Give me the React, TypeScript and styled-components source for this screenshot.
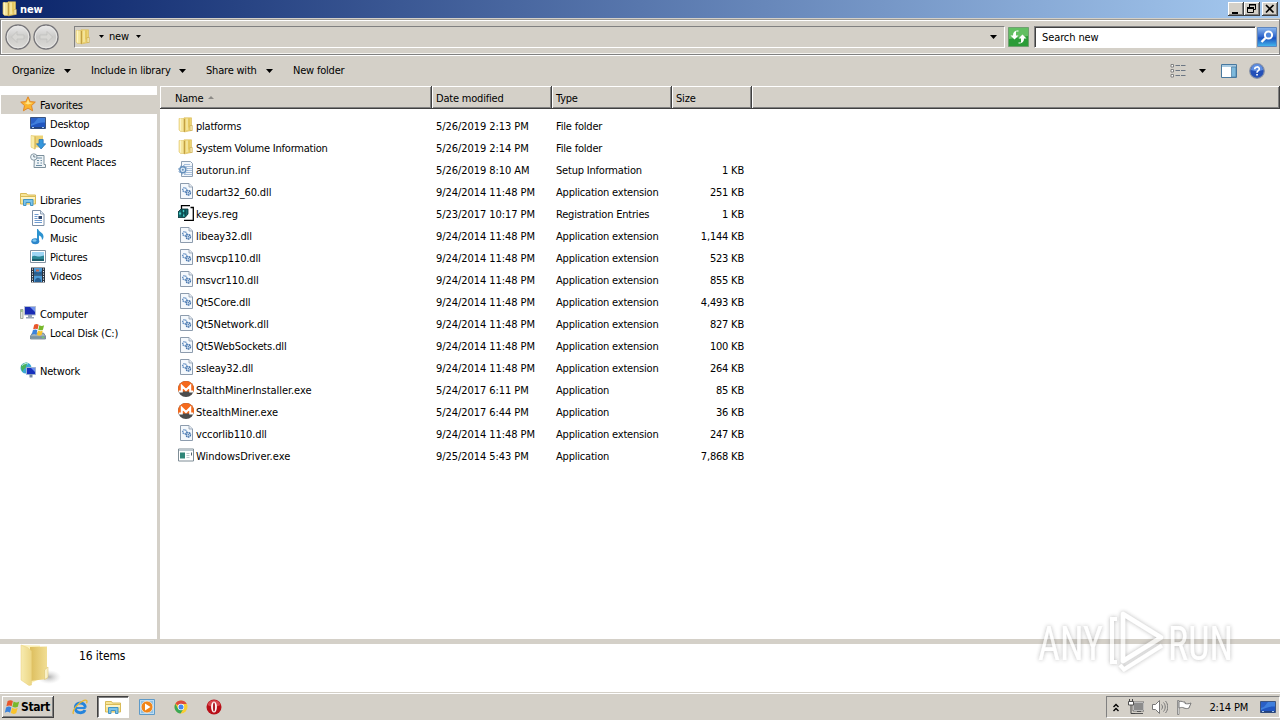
import React from "react";
import styled, { createGlobalStyle, css } from "styled-components";

const face = "#d4d0c8";

const GlobalStyle = createGlobalStyle`
  * { box-sizing: border-box; }
  body {
    margin: 0;
    overflow: hidden;
    background: ${face};
    color: #000;
    font-family: "DejaVu Sans Condensed", "DejaVu Sans", sans-serif;
    font-stretch: condensed;
    font-size: 11px;
    letter-spacing: -0.2px;
    line-height: 14px;
    cursor: default;
  }
  svg { display: block; flex: none; }
`;

/* ---------- icons ---------- */

const Svg16 = ({ children, size = 16 }: { children: React.ReactNode; size?: number }) => (
  <svg width={size} height={size} viewBox="0 0 16 16">
    {children}
  </svg>
);

const FolderIcon = () => (
  <Svg16>
    <path d="M1 1.500h5.500v13H2.500L1 13z" fill="#f5e59a" stroke="#e0c568" strokeWidth=".6" />
    <path d="M6 .8h7.500v12.700L7 14.800H6z" fill="#ecd373" stroke="#d8b955" strokeWidth=".6" />
    <path d="M2.500 1.500v12" stroke="#fcf4c6" strokeWidth="1.200" />
    <path d="M6.400 2v12.800" stroke="#b9933a" strokeWidth=".9" />
    <path d="M9 1.500v11.500" stroke="#f9eeb4" strokeWidth="1.200" />
    <path d="M11 1.500v9" stroke="#dcbc50" />
    <path d="M12 8.500h2.300v5H12z" fill="#f5e7ae" stroke="#c9aa4b" strokeWidth=".6" />
  </Svg16>
);

const StarIcon = () => (
  <Svg16>
    <path
      d="M8 .8 10.200 5.600 15.300 6.100 11.500 9.600 12.600 14.800 8 12.100 3.400 14.800 4.500 9.600.7 6.100 5.800 5.600z"
      fill="#fbb52d"
      stroke="#e0872a"
    />
    <path d="M8 3 9.300 6.500 12.800 7 8 8.500 4.500 7 6.800 6.500z" fill="#ffe48a" />
  </Svg16>
);

const DesktopIcon = () => (
  <Svg16>
    <path d="M.5 2.500h15v11H.5z" fill="#2156c0" stroke="#3d5580" />
    <path d="M1 3h14v4.500C10 7 6 9 1 11z" fill="#3f7fdd" />
    <path d="M1 3h7L4 8 1 9z" fill="#2a5fc6" />
    <path d="M1 12h14v1.500H1z" fill="#23427c" />
    <path d="M2 12.500h2M12 12.500h2" stroke="#a9c8ee" />
  </Svg16>
);

const DownloadsIcon = () => (
  <Svg16>
    <path d="M1 1.500h12v12H1z" fill="#ecd276" />
    <path d="M1 1.500 5 2.500v12.800L1 13z" fill="#faedaa" stroke="#e0c568" strokeWidth=".5" />
    <path d="M5 2.500v12.500" stroke="#c9a53c" strokeWidth=".8" />
    <path d="M9 5.500h4.200v4.300h2.500L11.100 15 6.500 9.800H9z" fill="#3597dc" stroke="#1f6cb0" strokeWidth=".7" />
  </Svg16>
);

const RecentIcon = () => (
  <Svg16>
    <path d="M4.500 2.500h9.500v9H15.500v3H4z" fill="#eef3f6" stroke="#7c909c" />
    <path d="M7 5h5M7 7.500h2M10.500 7.500H12M7 10h2M10.500 10H12M6 12.500h6" stroke="#6d8da4" />
    <circle cx="3.800" cy="4" r="3.200" fill="#eef6fa" stroke="#8798a3" />
    <path d="M3.800 2v2h1.700" fill="none" stroke="#4f6270" strokeWidth=".8" />
  </Svg16>
);

const LibrariesIcon = () => (
  <Svg16>
    <path d="M.5 2.500h6l1 1.500h8v9H.5z" fill="#f7e598" stroke="#d9bb58" />
    <path d="M1 5.500h14" stroke="#d9bb58" />
    <path d="M1 6h14v2H1z" fill="#fdf4c5" />
    <path d="M3.500 14.500v-6h9.500v6h-2.500v-3H6v3z" fill="#7cc3ea" stroke="#4294c4" />
  </Svg16>
);

const DocumentsIcon = () => (
  <Svg16>
    <path d="M2.500.5h8L14 4v11.500H2.500z" fill="#fff" stroke="#7c8fa6" />
    <path d="M10.500.5V4H14" fill="#dfe8f2" stroke="#7c8fa6" strokeWidth=".8" />
    <path d="M4.500 4.500h4M4.500 6.500h3M4.500 8.500h3M4.500 10.500h7.500M4.500 12.500h7.500" stroke="#6f9bd0" />
    <path d="M8.500 6h3.500v3H8.500z" fill="#31486e" />
  </Svg16>
);

const MusicIcon = () => (
  <Svg16>
    <path d="M8 0c1 3 5.500 3.500 5.500 7.500 0 1.500-.5 2.500-1.500 3.500 0-3-1.500-4-3-4.500V12H7V0z" fill="#2d93d0" />
    <ellipse cx="5.300" cy="12.300" rx="4" ry="3" fill="#2c86cb" />
    <ellipse cx="4.500" cy="11.500" rx="2" ry="1.200" fill="#80c8ef" />
  </Svg16>
);

const PicturesIcon = () => (
  <Svg16>
    <path d="M.5 2.500h15v12H.5z" fill="#fff" stroke="#8593a2" />
    <path d="M2 4h12v9H2z" fill="#9ed5f4" />
    <path d="M2 8.500c3-2 5 .500 8 0l4-1V13H2z" fill="#2c8796" />
    <path d="M2 11h12v2H2z" fill="#1b5f6e" />
  </Svg16>
);

const VideosIcon = () => (
  <Svg16>
    <path d="M1 .5h14v15H1z" fill="#2a3441" />
    <path d="M4 1h8v6.500H4zM4 8.500h8V15H4z" fill="#4d9ad6" />
    <path d="M4 5c2-2 4 2 8-1v3.500H4zM5 13c2-3 4-3 6 0v2H5z" fill="#265f93" />
    <path d="M6 2.500h3v2H6z" fill="#c06b52" />
    <path d="M2.500 1.500v14M13.500 1.500v14" stroke="#e8eef4" strokeDasharray="1.200 1.300" />
  </Svg16>
);

const ComputerIcon = () => (
  <Svg16>
    <path d="M.5 4.500h2.500v9H.5z" fill="#e1e6dd" stroke="#8f9a8c" strokeWidth=".8" />
    <path d="M1 6h1.500" stroke="#50a834" />
    <path d="M4.500 1.500h11v8.500h-11z" fill="#1a2cb4" stroke="#b4bfd0" />
    <path d="M10 2h5v5z" fill="#7193ee" />
    <path d="M8 10h4v2H8zM6 12h8v1.500H6z" fill="#98a5b8" />
  </Svg16>
);

const WindowsFlag = ({ x = 0, y = 0, s = 1 }: { x?: number; y?: number; s?: number }) => (
  <g transform={`translate(${x} ${y}) scale(${s})`}>
    <path d="M3 2c2-1.200 3.500-1 5 0L6.800 7C5.300 6 3.800 6 1.800 7z" fill="#e8562b" />
    <path d="M8.700 2.400c2 1.200 3.500 1.200 5.300 0l-1.300 5c-1.800 1.100-3.300 1-5.200 0z" fill="#78b82c" />
    <path d="M1.500 8c2-1 3.500-1 5 0L5.300 13C3.800 12 2.300 12 .3 13z" fill="#3b83dc" />
    <path d="M7.200 8.400c2 1.100 3.500 1.100 5.300 0l-1.300 5c-1.800 1.100-3.300 1-5.200 0z" fill="#f9c32c" />
  </g>
);

const DiskIcon = () => (
  <Svg16>
    <path d="M2.500 9h11l2 3v3H.5v-3z" fill="#9fb1bd" stroke="#697e8c" strokeWidth=".8" />
    <path d="M1 12.200h14V14.500H1z" fill="#7b939f" />
    <path d="M12 13.300h2" stroke="#6cdc5c" />
    <WindowsFlag x={1.500} y={-1} s={0.9} />
  </Svg16>
);

const NetworkIcon = () => (
  <Svg16>
    <circle cx="6" cy="6" r="5.500" fill="#3ba7d4" />
    <path d="M1 4c2-3 5-4 7-3-1 2-2 1.500-2 3.500S3 7 3 9 1 7 1 4z" fill="#48b35a" />
    <path d="M2 3.500C4 1.500 6 1 8 2" stroke="#c9f0f6" fill="none" />
    <path d="M6.500 5.500h9v7h-9z" fill="#1730bd" stroke="#9fb2d2" />
    <path d="M11 6h4v4z" fill="#6c90ee" />
    <path d="M9.500 12.500h3v3h-3z" fill="#7588a5" />
  </Svg16>
);

const InfIcon = () => (
  <Svg16>
    <path d="M3.500.5h9l2 2v13h-11z" fill="#f3f7fb" stroke="#8ea0b5" />
    <path d="M6 3.500h6M6 5.500h8M9 7.500h5M9 9.500h5M8 11.500h6M6 13.500h8" stroke="#a7bfdb" />
    <circle cx="4.800" cy="8.800" r="3" fill="#dce9f5" stroke="#6590bd" strokeWidth="1.400" />
    <circle cx="4.800" cy="8.800" r="4.200" fill="none" stroke="#6590bd" strokeDasharray="1.300 2" />
    <circle cx="4.800" cy="8.800" r="1" fill="#6590bd" />
  </Svg16>
);

const DllIcon = () => (
  <Svg16>
    <path d="M2.500.5h8.500l3.500 3.500v11.500h-12z" fill="#f4f8fc" stroke="#8d9cae" />
    <path d="M11 .5V4h3.500" fill="#e3eaf2" stroke="#8d9cae" strokeWidth=".8" />
    <circle cx="6.700" cy="6.800" r="2" fill="none" stroke="#5f8cc0" strokeWidth="1.500" strokeDasharray="1.200 .6" />
    <circle cx="10.300" cy="9.800" r="2.200" fill="#dfebf7" stroke="#3f6fa9" strokeWidth="1.400" strokeDasharray="1.500 .5" />
    <circle cx="10.300" cy="9.800" r=".7" fill="#3f6fa9" />
  </Svg16>
);

const RegIcon = () => (
  <Svg16>
    <path d="M4 .5h8l3 2.500v12H4z" fill="#fff" />
    <path d="M3.500 4V.7h8.500M12.500 2.500h2.800v12.800H6" fill="none" stroke="#000" strokeWidth="1.300" />
    <path d="M0 7 3 4h7v5l-3 3.500H0z" fill="#15696c" stroke="#062e32" strokeWidth=".8" />
    <path d="M1 7.500h2.500v2H1zM4.500 5h2v2h-2zM5 9.500h2v2H5z" fill="#45cbc8" />
    <path d="M4 4.500v7M7 4.500v7" stroke="#073438" />
  </Svg16>
);

const MoneroIcon = () => (
  <Svg16>
    <circle cx="8" cy="8" r="8" fill="#4c4c4c" />
    <path d="M0 8a8 8 0 0 1 16 0c0 1-.1 1.800-.4 2.500H.4C.1 9.800 0 9 0 8z" fill="#f5691c" />
    <path d="M.800 10.500h3V4.800L8 9l4.200-4.200v5.700h3" fill="none" stroke="#fff" strokeWidth="2" />
  </Svg16>
);

const ExeIcon = () => (
  <Svg16>
    <path d="M.5 2h15v12H.5z" fill="#fff" stroke="#7f8d96" />
    <path d="M1 2.500h14v1.500H1z" fill="#bcc9d1" />
    <path d="M2 5.500h5v6H2z" fill="#2f8578" />
    <path d="M8.500 6.500h3M8.500 8.500h3M8.500 10.500h3" stroke="#bcc8ce" />
    <path d="M13.500 5.500v3" stroke="#52636d" />
  </Svg16>
);

const ArrowDown = () => (
  <svg width="7" height="4" viewBox="0 0 7 4">
    <path d="M0 0h7L3.500 4z" fill="#000" />
  </svg>
);

const SmallArrow = () => (
  <svg width="5" height="3" viewBox="0 0 5 3">
    <path d="M0 0h5L2.500 3z" fill="#000" />
  </svg>
);

const NavArrow = ({ flip }: { flip?: boolean }) => (
  <svg width="26" height="26" viewBox="0 0 26 26">
    <defs>
      <linearGradient id="nav" x2="0" y2="1">
        <stop offset="0" stopColor="#ebebeb" />
        <stop offset=".5" stopColor="#cbcac8" />
        <stop offset="1" stopColor="#dddcd9" />
      </linearGradient>
    </defs>
    <circle cx="13" cy="13" r="12" fill="url(#nav)" stroke="#77767a" strokeWidth="1.400" />
    <circle cx="13" cy="13" r="10.800" fill="none" stroke="#e9e8e6" />
    <path
      transform={flip ? "translate(26 0) scale(-1 1)" : undefined}
      d="M6.500 13l5.500-5.500v3.500H19v4h-7v3.500z"
      fill="#d8d7d4"
      stroke="#bfbebb"
      strokeWidth=".7"
    />
  </svg>
);

const RefreshIcon = () => (
  <svg width="21" height="20" viewBox="0 0 21 20">
    <path d="M.5.5h20v19H.5z" fill="#2b9c38" stroke="#6f9f70" />
    <path d="M1 1h19v8L1 12z" fill="#62bf62" />
    <path d="M10.500 4.500H8V8.500H10.500L6.500 12.500 2.500 8.500H5C5 5 7 3.500 10.500 3.500z" fill="#fff" />
    <path d="M10.500 15.500H13v-4H10.500L14.500 7.500 18.500 11.500H16c0 3.500-2 5-5.500 5z" fill="#fff" />
  </svg>
);

const SearchIcon = () => (
  <svg width="20" height="20" viewBox="0 0 20 20">
    <defs>
      <linearGradient id="srch" x2="0" y2="1">
        <stop offset="0" stopColor="#8db9ee" />
        <stop offset=".5" stopColor="#2c63cb" />
        <stop offset=".55" stopColor="#1b50be" />
        <stop offset="1" stopColor="#45b9ee" />
      </linearGradient>
    </defs>
    <path d="M.5.500h19v19H.5z" fill="url(#srch)" stroke="#5f86bd" />
    <circle cx="11.500" cy="8" r="3.600" fill="#4e86dc" stroke="#fff" strokeWidth="2" />
    <path d="M8.500 11 4.500 15" stroke="#fff" strokeWidth="2.400" />
  </svg>
);

const ViewIcon = () => (
  <Svg16>
    <path d="M1 1.500h2.500v2.500H1zM1 6.500h2.500V9H1zM1 11.500h2.500V14H1z" fill="#fff" stroke="#777" strokeWidth=".9" />
    <path d="M5.500 2.500h4.500M11 2.500h4.500M5.500 7.500h4.500M11 7.500h4.500M5.500 12.500h4.500M11 12.500h4.500" stroke="#6b7683" />
  </Svg16>
);

const PaneIcon = () => (
  <Svg16>
    <path d="M.5 1.500h15v13H.5z" fill="#fff" stroke="#47789f" />
    <path d="M1 2h14v2H1z" fill="#a9cbe2" />
    <path d="M10.500 4h4.500v10h-4.500z" fill="#7db9dc" stroke="#47789f" strokeWidth=".7" />
  </Svg16>
);

const HelpIcon = () => (
  <Svg16>
    <circle cx="8" cy="8" r="7.300" fill="#2450b8" stroke="#8792a8" strokeWidth="1.200" />
    <path d="M2 7a6 6 0 0 1 12 0c-4 1.500-8 1.500-12 0z" fill="#5f8ee0" />
    <path d="M5.700 6.200c0-3 4.600-3 4.600-.2C10.300 7.700 8 7.600 8 9.800" fill="none" stroke="#fff" strokeWidth="1.600" />
    <path d="M7.200 11h1.700v1.600H7.200z" fill="#fff" />
  </Svg16>
);

const IeIcon = () => (
  <Svg16>
    <path d="M3.500 9h10.200" stroke="#2b8be0" strokeWidth="2" />
    <path d="M13.300 8.600C13.300 2.500 3.300 2.500 3.300 8.700c0 6 8 6.300 9.700 2.300" fill="none" stroke="#2484dc" strokeWidth="2.900" />
    <path d="M1.500 14.800C-.5 12 6 3.500 12 1.300c3-.8 3.500.7 2.500 2.900" fill="none" stroke="#e9b730" strokeWidth="1.300" />
  </Svg16>
);

const PlayerIcon = () => (
  <Svg16>
    <path d="M.5.500h15v15H.5z" fill="#bcdcf3" stroke="#5e9ac8" />
    <path d="M2 2h12v12H2z" fill="#8fc1e4" />
    <circle cx="8" cy="8" r="5.900" fill="#f08519" stroke="#fff" strokeWidth=".6" />
    <path d="M6 4.500 11.500 8 6 11.500z" fill="#fff" />
  </Svg16>
);

const ChromeIcon = () => (
  <Svg16>
    <circle cx="8" cy="8" r="6.500" fill="#f9cd33" />
    <path d="M8 8 2.370 4.750A6.500 6.500 0 0 1 13.630 4.750L13.500 5H8z" fill="#dd4b3e" />
    <path d="M8 8 5 9.800 2.370 4.750A6.500 6.500 0 0 0 7.500 14.500L10.500 9.800z" fill="#3aa757" />
    <circle cx="8" cy="8" r="3.200" fill="#fff" />
    <circle cx="8" cy="8" r="2.500" fill="#4587ee" />
  </Svg16>
);

const OperaIcon = () => (
  <Svg16>
    <circle cx="8" cy="8" r="7.500" fill="#b80f18" />
    <path d="M1.500 6a6.800 6.800 0 0 1 13 0c-4 2-9 2-13 0z" fill="#d8484f" />
    <ellipse cx="8" cy="8" rx="2.900" ry="5.500" fill="#fff" />
    <ellipse cx="8" cy="8" rx="1.100" ry="4.500" fill="#b0202a" />
  </Svg16>
);

const TrayNetworkIcon = () => (
  <Svg16>
    <path d="M5.500 3.500h10v8h-10z" fill="#8c8c8c" stroke="#fff" />
    <path d="M5 3h11v9H5z" fill="none" stroke="#555" strokeWidth=".8" />
    <path d="M9 12.500h4M7 14.500h8" stroke="#555" />
    <path d="M1.500 0v3h3V0M3 4v10.500h4" fill="none" stroke="#444" />
    <path d="M.5 2.500h5v3.500h-5z" fill="#fff" stroke="#444" strokeWidth=".9" />
  </Svg16>
);

const SpeakerIcon = () => (
  <Svg16>
    <path d="M.5 5.500h3L7.500 1.500v13l-4-4h-3z" fill="#fff" stroke="#777" />
    <path d="M9.500 5.500c1.300 1.500 1.300 3.500 0 5M11.500 3.500c2.300 2.500 2.300 6.500 0 9M13.500 2c3 3.500 3 8.500 0 12" fill="none" stroke="#777" />
  </Svg16>
);

const FlagIcon = () => (
  <Svg16>
    <path d="M1.500 1.500v14h1.500v-14z" fill="#fff" stroke="#777" strokeWidth=".8" />
    <path d="M3 2.500c3-1 4 1 6 .5v1.500c2 .5 3.500.5 6-.5l-2 5c-2 1-3.500.5-5 0-2-1-3-.5-5 0z" fill="#fff" stroke="#777" />
  </Svg16>
);

const BigFolder = () => (
  <svg width="42" height="44" viewBox="0 0 42 44">
    <defs>
      <linearGradient id="fold" x2="1">
        <stop offset="0" stopColor="#f7ebb0" />
        <stop offset="1" stopColor="#ecd684" />
      </linearGradient>
      <linearGradient id="foldr" x2="1">
        <stop offset="0" stopColor="#dcbd5c" />
        <stop offset="1" stopColor="#f1de94" />
      </linearGradient>
      <radialGradient id="shade">
        <stop offset="0" stopColor="#999" stopOpacity=".75" />
        <stop offset="1" stopColor="#ccc" stopOpacity="0" />
      </radialGradient>
    </defs>
    <ellipse cx="29" cy="33" rx="12" ry="7" fill="url(#shade)" />
    <path d="M2 1l18 .5v33L8 41 2 36z" fill="#fbf1bd" />
    <path d="M10 3l17-.5V35l-17 2z" fill="url(#foldr)" />
    <path d="M1 1 7.500 3.500 11.500 7v34L9 41.500 1 36z" fill="url(#fold)" stroke="#e8cf7b" strokeWidth=".5" />
    <path d="M24.500 26l3.500-3v10.500L24.500 35.500z" fill="#f9f1c9" stroke="#d9bf66" strokeWidth=".5" />
  </svg>
);

/* ---------- window chrome ---------- */

const Window = styled.div`
  width: 1280px;
  height: 720px;
  display: flex;
  flex-direction: column;
  overflow: hidden;
  background: ${face};
`;

const TitleBar = styled.header`
  height: 18px;
  flex: none;
  display: flex;
  align-items: center;
  gap: 2px;
  padding: 0 2px;
  background: linear-gradient(to right, #0a246a, #a6caf0);
  color: #fff;
  font-weight: bold;
`;

const Title = styled.span`
  flex: 1;
  padding-top: 1px;
  letter-spacing: -0.1px;
`;

const raised = css`
  background: ${face};
  box-shadow: inset -1px -1px #404040, inset 1px 1px #fff, inset -2px -2px #808080;
`;

const CaptionButton = styled.button<{ $gap?: boolean }>`
  ${raised}
  width: 16px;
  height: 14px;
  padding: 0;
  border: 0;
  margin-left: ${(p) => (p.$gap ? "0" : "-2px")};
`;

const AddressBar = styled.div`
  height: 36px;
  flex: none;
  display: flex;
  align-items: center;
  padding: 0 1px 0 4px;
  border: 1px solid #808080;
  border-top-color: #9c9a94;
  box-shadow: inset 1px 1px #fff, inset 0 -1px #f4f3f0;
  margin-top: 1px;
`;

const NavButtons = styled.div`
  display: flex;
  gap: 2px;
  width: 69px;
`;

const sunken = css`
  height: 22px;
  border: 1px solid #808080;
  border-right-color: #fff;
  border-bottom-color: #fff;
`;

const AddressField = styled.div`
  ${sunken}
  width: 931px;
  display: flex;
  align-items: center;
  padding: 0 7px 1px 0;
`;

const Crumb = styled.span`
  flex: 1;
  display: flex;
  align-items: center;
  gap: 6px;
  margin-left: 8px;
`;

const CrumbLabel = styled.span`
  margin: 0 1px 0 -1px;
  padding-top: 1px;
`;

const RefreshButton = styled.div`
  margin: 0 5px 0 3px;
`;

const SearchField = styled.div`
  ${sunken}
  width: 222px;
  background: #fff;
  box-shadow: inset 1px 1px #404040;
  padding: 4px 7px;
  margin-right: 1px;
  letter-spacing: -0.1px;
`;

const Toolbar = styled.div`
  height: 31px;
  flex: none;
  display: flex;
  align-items: center;
  padding: 0 15px 1px 12px;
  border-top: 1px solid #fff;
`;

const ToolItem = styled.div<{ $width: number; $after?: number }>`
  width: ${(p) => p.$width}px;
  margin-right: ${(p) => p.$after ?? 0}px;
  display: flex;
  align-items: center;
  justify-content: space-between;
  white-space: nowrap;
`;

const ToolIcons = styled.div`
  margin-left: auto;
  display: flex;
  align-items: center;
`;

const ToolSlot = styled.div<{ $after: number }>`
  margin-right: ${(p) => p.$after}px;
`;

/* ---------- body ---------- */

const Body = styled.div`
  height: 553px;
  flex: none;
  display: flex;
`;

const Sidebar = styled.nav`
  width: 160px;
  flex: none;
  padding-top: 9px;
  background: linear-gradient(to right, #fff 157px, ${face} 157px);
`;

const Group = styled.div`
  margin-bottom: 19px;
`;

const TreeItem = styled.div<{ $child?: boolean; $selected?: boolean }>`
  height: 19px;
  display: flex;
  align-items: center;
  gap: 4px;
  margin-left: 1px;
  padding-left: ${(p) => (p.$child ? 29 : 19)}px;
  background: ${(p) => (p.$selected ? face : "transparent")};
  white-space: nowrap;

  svg {
    margin-bottom: 1px;
  }
`;

const TreeLabel = styled.span`
  padding-top: 2px;
`;

const Files = styled.main`
  flex: 1;
  background: #fff;
`;

const HeaderRow = styled.div`
  display: grid;
  grid-template-columns: 272px 120px 120px 80px 1fr;
  height: 23px;
  margin-bottom: 6px;
`;

const HeaderCell = styled.div<{ $first?: boolean }>`
  ${raised}
  display: flex;
  align-items: center;
  gap: 5px;
  padding: 2px 0 0 ${(p) => (p.$first ? 15 : 4)}px;
`;

const FileRow = styled.div`
  display: grid;
  grid-template-columns: 271px 120px 120px 80px;
  height: 22px;
  padding-top: 5px;
  white-space: nowrap;
`;

const NameCell = styled.div<{ $tracking: number }>`
  display: flex;
  gap: 2px;
  padding-left: 18px;
  letter-spacing: ${(p) => p.$tracking}px;

  svg {
    margin-top: -3px;
  }
`;

const Cell = styled.div<{ $right?: boolean; $tracking?: number }>`
  padding: 0 7px 0 5px;
  text-align: ${(p) => (p.$right ? "right" : "left")};
  letter-spacing: ${(p) => p.$tracking ?? -0.2}px;
`;

const Details = styled.footer`
  height: 53px;
  flex: none;
  display: flex;
  gap: 17px;
  padding: 0 20px;
  border-top: 5px solid ${face};
  background: #fff;
  font-size: 12px;
  letter-spacing: -0.1px;
`;

const ItemCount = styled.span`
  padding-top: 5px;
`;

/* ---------- taskbar ---------- */

const Taskbar = styled.div`
  flex: 1;
  display: flex;
  align-items: center;
  margin-top: 1px;
  padding-left: 2px;
  border-top: 1px solid #fff;
`;

const StartButton = styled.div`
  ${raised}
  width: 52px;
  height: 22px;
  display: flex;
  align-items: center;
  gap: 1px;
  padding-left: 2px;
  margin-right: 18px;
  font-size: 12px;
  font-weight: bold;
  letter-spacing: -0.4px;
`;

const TaskIcon = styled.div<{ $after?: number }>`
  margin-right: ${(p) => p.$after ?? 0}px;
`;

const ActiveTask = styled.div`
  width: 32px;
  height: 22px;
  display: flex;
  align-items: center;
  justify-content: center;
  margin-right: 10px;
  background: #fff;
  border: 1px solid #404040;
  border-right-color: #fff;
  border-bottom-color: #fff;
  box-shadow: inset 1px 1px #808080;
`;

const Tray = styled.div`
  width: 174px;
  height: 22px;
  margin-left: auto;
  display: flex;
  align-items: center;
  padding: 0 3px 0 6px;
  border: 1px solid #808080;
  border-right-color: #fff;
  border-bottom-color: #fff;
`;

const TrayIcons = styled.div`
  display: flex;
  align-items: center;
  gap: 8px;
  flex: 1;
`;

const Clock = styled.span`
  margin-right: 12px;
  padding-top: 2px;
`;

const Watermark = styled.div`
  position: absolute;
  left: 1030px;
  top: 592px;
  pointer-events: none;
`;

/* ---------- data ---------- */

const tree = [
  {
    label: "Favorites",
    icon: <StarIcon />,
    selected: true,
    items: [
      { label: "Desktop", icon: <DesktopIcon /> },
      { label: "Downloads", icon: <DownloadsIcon /> },
      { label: "Recent Places", icon: <RecentIcon /> },
    ],
  },
  {
    label: "Libraries",
    icon: <LibrariesIcon />,
    items: [
      { label: "Documents", icon: <DocumentsIcon /> },
      { label: "Music", icon: <MusicIcon /> },
      { label: "Pictures", icon: <PicturesIcon /> },
      { label: "Videos", icon: <VideosIcon /> },
    ],
  },
  {
    label: "Computer",
    icon: <ComputerIcon />,
    items: [{ label: "Local Disk (C:)", icon: <DiskIcon /> }],
  },
  { label: "Network", icon: <NetworkIcon />, items: [] },
];

const icons = {
  folder: FolderIcon,
  inf: InfIcon,
  dll: DllIcon,
  reg: RegIcon,
  monero: MoneroIcon,
  exe: ExeIcon,
};

// name spacing per file kind
const tracking = {
  folder: -0.22,
  inf: -0.02,
  dll: -0.12,
  reg: 0.05,
  monero: -0.04,
  exe: 0,
};

type FileEntry = [keyof typeof icons, string, string, string, string];

const files: FileEntry[] = [
  ["folder", "platforms", "5/26/2019 2:13 PM", "File folder", ""],
  ["folder", "System Volume Information", "5/26/2019 2:14 PM", "File folder", ""],
  ["inf", "autorun.inf", "5/26/2019 8:10 AM", "Setup Information", "1 KB"],
  ["dll", "cudart32_60.dll", "9/24/2014 11:48 PM", "Application extension", "251 KB"],
  ["reg", "keys.reg", "5/23/2017 10:17 PM", "Registration Entries", "1 KB"],
  ["dll", "libeay32.dll", "9/24/2014 11:48 PM", "Application extension", "1,144 KB"],
  ["dll", "msvcp110.dll", "9/24/2014 11:48 PM", "Application extension", "523 KB"],
  ["dll", "msvcr110.dll", "9/24/2014 11:48 PM", "Application extension", "855 KB"],
  ["dll", "Qt5Core.dll", "9/24/2014 11:48 PM", "Application extension", "4,493 KB"],
  ["dll", "Qt5Network.dll", "9/24/2014 11:48 PM", "Application extension", "827 KB"],
  ["dll", "Qt5WebSockets.dll", "9/24/2014 11:48 PM", "Application extension", "100 KB"],
  ["dll", "ssleay32.dll", "9/24/2014 11:48 PM", "Application extension", "264 KB"],
  ["monero", "StalthMinerInstaller.exe", "5/24/2017 6:11 PM", "Application", "85 KB"],
  ["monero", "StealthMiner.exe", "5/24/2017 6:44 PM", "Application", "36 KB"],
  ["dll", "vccorlib110.dll", "9/24/2014 11:48 PM", "Application extension", "247 KB"],
  ["exe", "WindowsDriver.exe", "9/25/2014 5:43 PM", "Application", "7,868 KB"],
];

const App = () => {
  return (
    <>
      <GlobalStyle />
      <Window>
        <TitleBar>
          <FolderIcon />
          <Title>new</Title>
          <CaptionButton>
            <svg width="16" height="14">
              <path d="M4 10h6v2H4z" />
            </svg>
          </CaptionButton>
          <CaptionButton>
            <svg width="16" height="14">
              <path d="M5.500 5V2.500h6v5H10M3.500 6.500h6v4h-6z" fill="none" stroke="#000" />
              <path d="M3 5h7v2H3zM5 2h7v1.500H5z" />
            </svg>
          </CaptionButton>
          <CaptionButton $gap>
            <svg width="16" height="14">
              <path d="M4 3l7.500 7.500M11.500 3 4 10.500" stroke="#000" strokeWidth="1.700" />
            </svg>
          </CaptionButton>
        </TitleBar>

        <AddressBar>
          <NavButtons>
            <NavArrow />
            <NavArrow flip />
          </NavButtons>
          <AddressField>
            <FolderIcon />
            <Crumb>
              <SmallArrow />
              <CrumbLabel>new</CrumbLabel>
              <SmallArrow />
            </Crumb>
            <ArrowDown />
          </AddressField>
          <RefreshButton>
            <RefreshIcon />
          </RefreshButton>
          <SearchField>Search new</SearchField>
          <SearchIcon />
        </AddressBar>

        <Toolbar>
          <ToolItem $width={59} $after={20}>
            Organize <ArrowDown />
          </ToolItem>
          <ToolItem $width={95} $after={20}>
            Include in library <ArrowDown />
          </ToolItem>
          <ToolItem $width={67} $after={20}>
            Share with <ArrowDown />
          </ToolItem>
          <ToolItem $width={60}>New folder</ToolItem>
          <ToolIcons>
            <ToolSlot $after={13}>
              <ViewIcon />
            </ToolSlot>
            <ToolSlot $after={15}>
              <ArrowDown />
            </ToolSlot>
            <ToolSlot $after={12}>
              <PaneIcon />
            </ToolSlot>
            <HelpIcon />
          </ToolIcons>
        </Toolbar>

        <Body>
          <Sidebar>
            {tree.map((group) => (
              <Group key={group.label}>
                <TreeItem $selected={group.selected}>
                  {group.icon}
                  <TreeLabel>{group.label}</TreeLabel>
                </TreeItem>
                {group.items.map((item) => (
                  <TreeItem key={item.label} $child>
                    {item.icon}
                    <TreeLabel>{item.label}</TreeLabel>
                  </TreeItem>
                ))}
              </Group>
            ))}
          </Sidebar>

          <Files>
            <HeaderRow>
              <HeaderCell $first>
                Name
                <svg width="6" height="6">
                  <path d="M0 3 3 0l3 3z" fill="#8c8a86" />
                </svg>
              </HeaderCell>
              <HeaderCell>Date modified</HeaderCell>
              <HeaderCell>Type</HeaderCell>
              <HeaderCell>Size</HeaderCell>
              <HeaderCell />
            </HeaderRow>
            {files.map(([icon, name, date, type, size]) => {
              const Icon = icons[icon];
              return (
                <FileRow key={name}>
                  <NameCell $tracking={tracking[icon]}>
                    <Icon />
                    {name}
                  </NameCell>
                  <Cell $tracking={-0.06}>{date}</Cell>
                  <Cell>{type}</Cell>
                  <Cell $right>{size}</Cell>
                </FileRow>
              );
            })}
          </Files>
        </Body>

        <Details>
          <BigFolder />
          <ItemCount>16 items</ItemCount>
        </Details>

        <Taskbar>
          <StartButton>
            <Svg16>
              <WindowsFlag x={0.5} y={0} s={1.05} />
            </Svg16>
            Start
          </StartButton>
          <TaskIcon $after={9}>
            <IeIcon />
          </TaskIcon>
          <ActiveTask>
            <LibrariesIcon />
          </ActiveTask>
          <TaskIcon $after={18}>
            <PlayerIcon />
          </TaskIcon>
          <TaskIcon $after={17}>
            <ChromeIcon />
          </TaskIcon>
          <TaskIcon>
            <OperaIcon />
          </TaskIcon>
          <Tray>
            <TrayIcons>
              <svg width="7" height="9">
                <path d="M.5 4 3 1.500 5.500 4M.5 8 3 5.500 5.500 8" fill="none" stroke="#000" strokeWidth="1.400" />
              </svg>
              <TrayNetworkIcon />
              <SpeakerIcon />
              <FlagIcon />
            </TrayIcons>
            <Clock>2:14 PM</Clock>
            <DesktopIcon />
          </Tray>
        </Taskbar>

        <Watermark>
          <svg width="240" height="100" viewBox="0 -10 240 100">
            <defs>
              <filter id="halo" x="-10%" y="-10%" width="120%" height="120%">
                <feDropShadow dx="0" dy="0" stdDeviation="2" floodColor="#777" floodOpacity=".75" />
              </filter>
            </defs>
            <g filter="url(#halo)" opacity=".7" fill="#fff" fontFamily="Roboto, sans-serif" fontSize="49" letterSpacing="0">
              <text x="8" y="58" textLength="65" lengthAdjust="spacingAndGlyphs">ANY</text>
              <text x="138" y="58" textLength="65" lengthAdjust="spacingAndGlyphs">RUN</text>
              <path d="M93 12 131 35.500 93 59z" fill="none" stroke="#fff" strokeWidth="4.500" strokeLinejoin="round" />
              <path d="M87 17h-5v43h5M90 63l4 4.500 38-24" fill="none" stroke="#fff" strokeWidth="4" />
            </g>
          </svg>
        </Watermark>
      </Window>
    </>
  );
};

export default App;
